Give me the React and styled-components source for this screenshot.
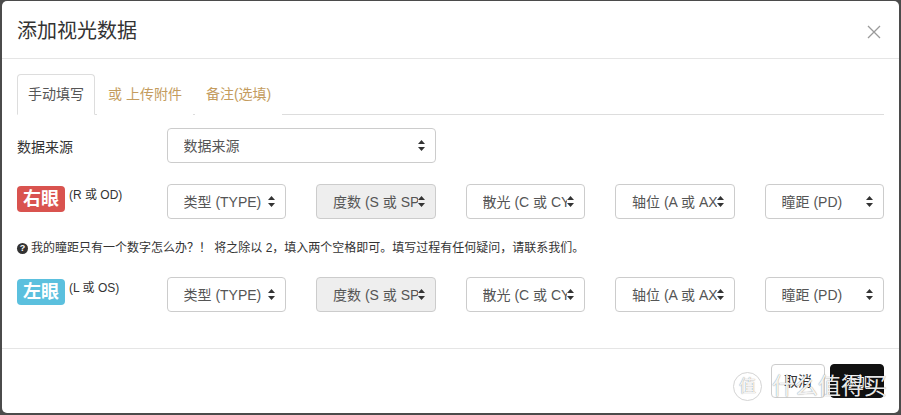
import styled, { createGlobalStyle } from "styled-components";

const GlobalStyle = createGlobalStyle`
  html, body {
    margin: 0;
    padding: 0;
    background: #4b4b4b;
    width: 901px;
    height: 415px;
    overflow: hidden;
  }
  body {
    font-family: "Liberation Sans", "Noto Sans CJK SC", sans-serif;
    font-size: 14px;
    color: #333;
  }
`;

const Modal = styled.div`
  position: relative;
  margin: 1px 2px 0 2px;
  width: 897px;
  height: 412px;
  background: #fff;
  border-radius: 5px;
  display: flex;
  flex-direction: column;
  overflow: hidden;
`;

const Header = styled.div`
  padding: 17px 15px 13px;
  border-bottom: 1px solid #e5e5e5;
  display: flex;
  align-items: center;
  justify-content: space-between;
`;

const Title = styled.h4`
  margin: 0;
  font-size: 20px;
  line-height: 27px;
  font-weight: normal;
  color: #333;
`;

const Close = styled.button`
  border: 0;
  background: none;
  padding: 0;
  margin-right: 3px;
  width: 14px;
  height: 14px;
  display: flex;
  cursor: pointer;
`;

const Body = styled.div`
  flex: 1;
  padding: 15px;
`;

const Tabs = styled.ul`
  list-style: none;
  margin: 0;
  padding: 0;
  display: flex;
  border-bottom: 1px solid #ddd;
`;

const Tab = styled.li`
  margin-right: 2px;
  margin-bottom: -1px;
  padding: 9px 10px 10px;
  line-height: 20px;
  font-size: 14px;
  border: 1px solid ${(p) => (p.$active ? "#ddd" : "transparent")};
  border-bottom-color: ${(p) => (p.$active ? "#fff" : "transparent")};
  border-radius: 4px 4px 0 0;
  background: #fff;
  color: ${(p) => (p.$active ? "#555" : "#c49c5e")};
`;

const Form = styled.div`
  margin-top: 13px;
`;

const Row = styled.div`
  display: grid;
  grid-template-columns: repeat(6, minmax(0, 1fr));
  column-gap: 30px;
  margin-bottom: ${(p) => (p.$last ? "20px" : "21px")};
`;

const FieldLabel = styled.div`
  display: flex;
  align-items: center;
  height: 35px;
  font-size: 14px;
  color: #333;
`;

const EyeLabel = styled.div`
  display: flex;
  align-items: flex-start;
  gap: 4px;
  padding-top: 2px;
  white-space: nowrap;
`;

const Badge = styled.span`
  display: inline-block;
  height: 26px;
  line-height: 26px;
  padding: 0 6px;
  border-radius: 4px;
  font-size: 18px;
  font-weight: bold;
  color: #fff;
  background: ${(p) => p.$color};
`;

const Side = styled.span`
  font-size: 12px;
  line-height: 17px;
  margin-top: 1px;
  color: #333;
`;

const Select = styled.div`
  grid-column: span ${(p) => p.$span || 1};
  height: 35px;
  box-sizing: border-box;
  border: 1px solid #ccc;
  border-radius: 4px;
  background: ${(p) => (p.$disabled ? "#eee" : "#fff")};
  display: flex;
  align-items: center;
  padding: 0 10px 0 16px;
  font-size: 14px;
  color: #555;
`;

const SelectText = styled.span`
  flex: 1;
  min-width: 0;
  white-space: nowrap;
  overflow: hidden;
  line-height: 20px;
`;

const Help = styled.p`
  margin: 0 0 20px;
  font-size: 12px;
  line-height: 17px;
  color: #333;
  display: flex;
  align-items: center;
  gap: 3px;
`;

const HelpIcon = styled.span`
  width: 11px;
  height: 11px;
  border-radius: 50%;
  background: #333;
  color: #fff;
  font-size: 9px;
  font-weight: bold;
  line-height: 11px;
  text-align: center;
  font-family: "Liberation Sans", sans-serif;
`;

const Footer = styled.div`
  border-top: 1px solid #e5e5e5;
  padding: 15px;
  display: flex;
  justify-content: flex-end;
  gap: 5px;
`;

const Button = styled.button`
  height: 34px;
  padding: 6px 12px;
  font-family: inherit;
  font-size: 14px;
  line-height: 20px;
  border-radius: 4px;
  border: 1px solid ${(p) => (p.$primary ? "#111" : "#ccc")};
  background: ${(p) => (p.$primary ? "#111" : "#fff")};
  color: ${(p) => (p.$primary ? "#fff" : "#333")};
`;

const Watermark = styled.div`
  position: absolute;
  left: 731px;
  top: 370px;
  display: flex;
  align-items: center;
  gap: 10px;
  pointer-events: none;
  color: rgba(255, 255, 255, 0.92);
  text-shadow: 0 0 1px rgba(0, 0, 0, 0.55);
`;

const WatermarkSeal = styled.span`
  width: 27px;
  height: 27px;
  border: 1.5px solid #d4d4d4;
  border-radius: 50%;
  display: flex;
  align-items: center;
  justify-content: center;
  font-size: 17px;
  line-height: 1;
`;

const WatermarkText = styled.span`
  font-size: 23px;
  line-height: 30px;
`;

function Arrows() {
  return (
    <svg width="7" height="11" viewBox="0 0 7 11" style={{ flexShrink: 0 }}>
      <path d="M3.5 0 L7 4 L0 4 Z" fill="#333" />
      <path d="M0 7 L7 7 L3.5 11 Z" fill="#333" />
    </svg>
  );
}

function Dropdown({ text, disabled, span }) {
  return (
    <Select $disabled={disabled} $span={span}>
      <SelectText>{text}</SelectText>
      <Arrows />
    </Select>
  );
}

const fields = [
  { text: "类型 (TYPE)" },
  { text: "度数 (S 或 SPH)", disabled: true },
  { text: "散光 (C 或 CYL)" },
  { text: "轴位 (A 或 AXIS)" },
  { text: "瞳距 (PD)" },
];

function EyeRow({ name, side, color, last }) {
  return (
    <Row $last={last}>
      <EyeLabel>
        <Badge $color={color}>{name}</Badge>
        <Side>{side}</Side>
      </EyeLabel>
      {fields.map((f) => (
        <Dropdown key={f.text} text={f.text} disabled={f.disabled} />
      ))}
    </Row>
  );
}

export default function App() {
  return (
    <>
      <GlobalStyle />
      <Modal>
        <Header>
          <Title>添加视光数据</Title>
          <Close aria-label="关闭">
            <svg width="14" height="14" viewBox="0 0 14 14">
              <path d="M1 1 L13 13 M13 1 L1 13" stroke="#9a9a9a" strokeWidth="1.3" />
            </svg>
          </Close>
        </Header>
        <Body>
          <Tabs>
            <Tab $active>手动填写</Tab>
            <Tab>或 上传附件</Tab>
            <Tab>备注(选填)</Tab>
          </Tabs>
          <Form>
            <Row>
              <FieldLabel>数据来源</FieldLabel>
              <Dropdown text="数据来源" span={2} />
            </Row>
            <EyeRow name="右眼" side="(R 或 OD)" color="#d9534f" />
            <Help>
              <HelpIcon>?</HelpIcon>
              我的瞳距只有一个数字怎么办？！ 将之除以 2，填入两个空格即可。填写过程有任何疑问，请联系我们。
            </Help>
            <EyeRow name="左眼" side="(L 或 OS)" color="#5bc0de" last />
          </Form>
        </Body>
        <Footer>
          <Button>取消</Button>
          <Button $primary>添加</Button>
        </Footer>
        <Watermark>
          <WatermarkSeal>值</WatermarkSeal>
          <WatermarkText>什么值得买</WatermarkText>
        </Watermark>
      </Modal>
    </>
  );
}
